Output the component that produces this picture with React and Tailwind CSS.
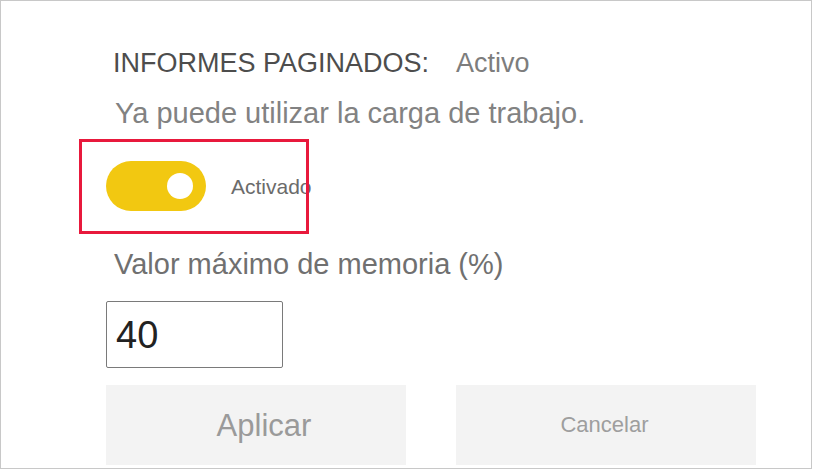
export default function App() {
  return (
    <div className="w-[813px] h-[470px] bg-white" style={{ fontFamily: '"Liberation Sans", Arial, sans-serif' }}>
      <div className="w-[812px] h-[469px] border border-[#c8c8c8] bg-white pl-[105px] pt-[49px] flex flex-col items-start">
        {/* status header */}
        <div className="flex items-baseline leading-none">
          <span className="w-[350px] pl-[7px] text-[27px] text-[#4d4d4d]">INFORMES PAGINADOS:</span>
          <span className="text-[27px] text-[#7d7d7d]">Activo</span>
        </div>

        <p className="mt-[22px] pl-[9px] text-[29px] leading-none text-[#828282]">
          Ya puede utilizar la carga de trabajo.
        </p>

        {/* toggle */}
        <div className="relative mt-[33px] flex items-center">
          <div className="w-[100px] h-[50px] rounded-full bg-[#f2c811] flex items-center justify-end pr-[13px]">
            <span className="w-[26px] h-[26px] rounded-full bg-white"></span>
          </div>
          <span className="ml-[25px] text-[21px] leading-none text-[#6b6b6b]">Activado</span>
          <div className="absolute -left-[27px] -top-[22px] w-[230px] h-[95px] border-[3px] border-[#e8193c] pointer-events-none"></div>
        </div>

        <p className="mt-[39px] pl-[8px] text-[29px] leading-none text-[#707070]">
          Valor máximo de memoria (%)
        </p>

        <div className="mt-[22px] w-[177px] h-[67px] border border-[#7a7a7a] rounded-[2px] flex items-center pl-[9px]">
          <span className="text-[38px] leading-none text-[#222222]">40</span>
        </div>

        <div className="mt-[17px] flex gap-[50px]">
          <button className="w-[300px] h-[80px] bg-[#f3f3f3] flex items-center justify-center pl-4 text-[31px] leading-none text-[#9a9a9a]">
            Aplicar
          </button>
          <button className="w-[300px] h-[80px] bg-[#f3f3f3] flex items-center justify-center pr-[3px] text-[22px] leading-none text-[#9e9e9e]">
            Cancelar
          </button>
        </div>
      </div>
    </div>
  );
}
